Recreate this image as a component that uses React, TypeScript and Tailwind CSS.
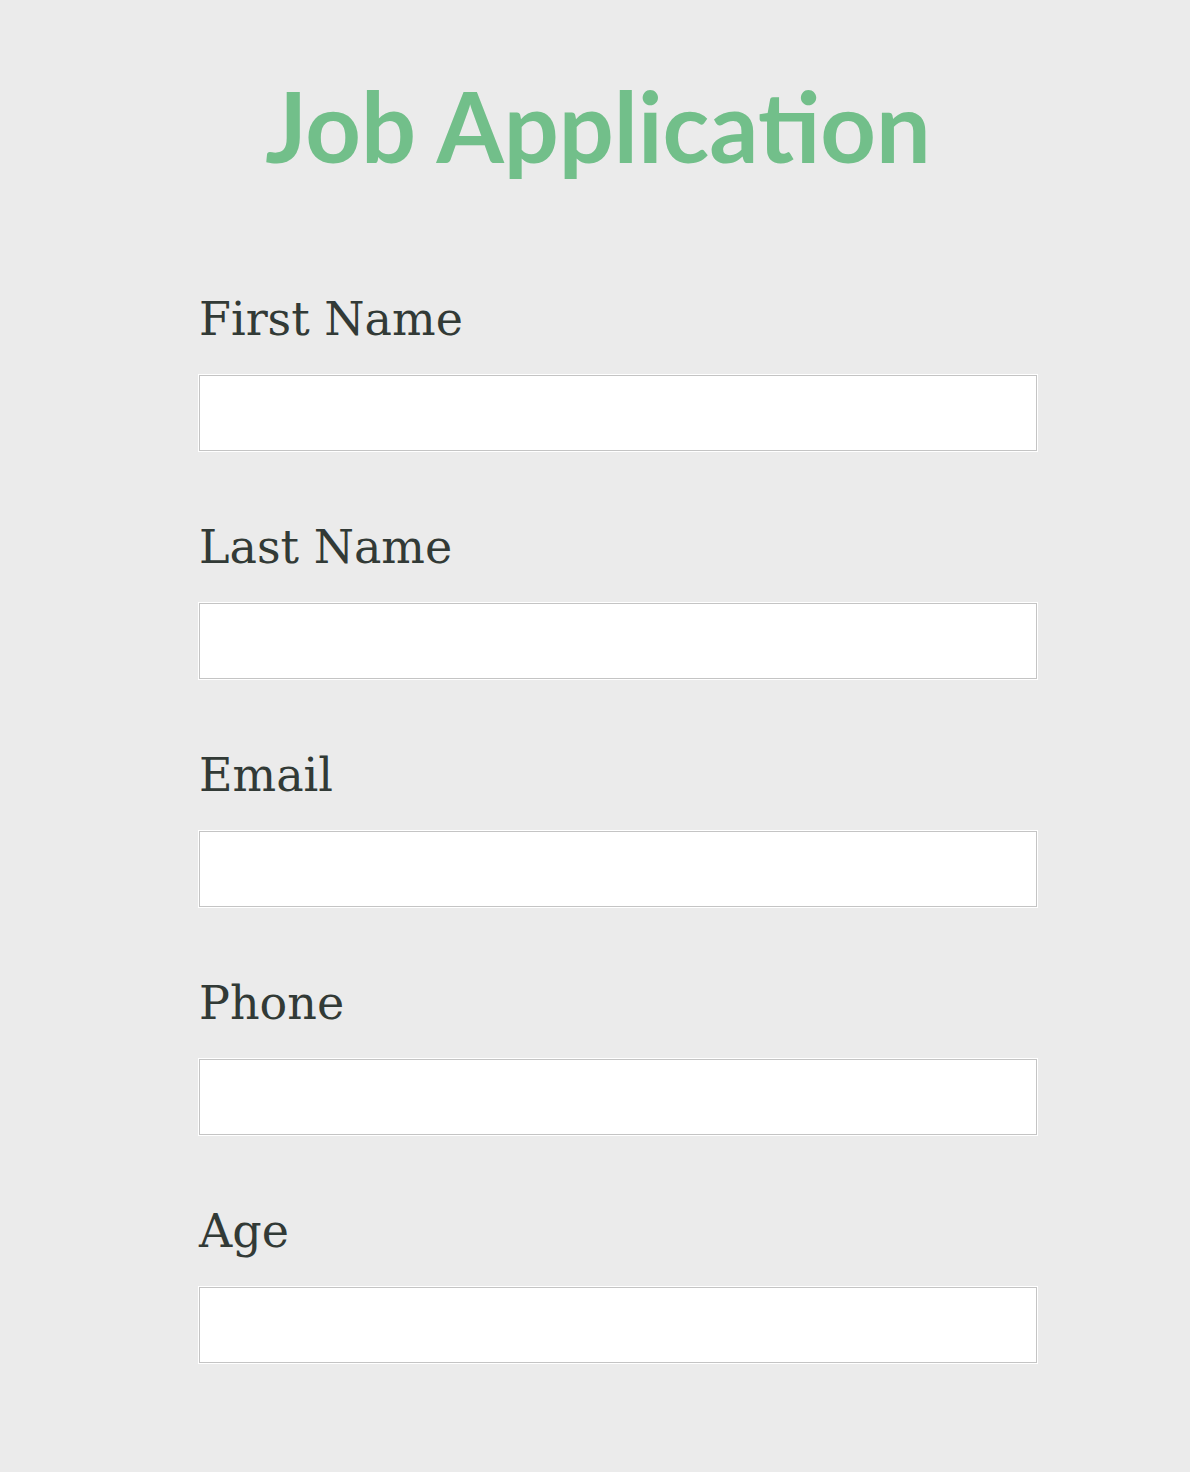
const fields = ["First Name", "Last Name", "Email", "Phone", "Age"];

export default function App() {
  return (
    <div className="min-h-[1472px] bg-[#ebebeb] pt-[77px]">
      <h1 className="pl-[6px] text-center font-['Lato',sans-serif] text-[97px] font-bold leading-none text-[#72bf8a]">
        Job Application
      </h1>

      <form className="ml-[199px] mt-[122px] w-[838px]">
        {fields.map((label) => (
          <div key={label} className="mb-[73px]">
            <label className="block h-[46px] font-['DejaVu_Serif',serif] text-[46px] leading-none text-[#323a36]">
              {label}
            </label>
            <input
              type="text"
              className="mt-[33px] block h-[76px] w-full border border-[#c4c4c4] bg-white shadow-[0_0_0_1px_#ffffff] outline-none"
            />
          </div>
        ))}
      </form>
    </div>
  );
}
